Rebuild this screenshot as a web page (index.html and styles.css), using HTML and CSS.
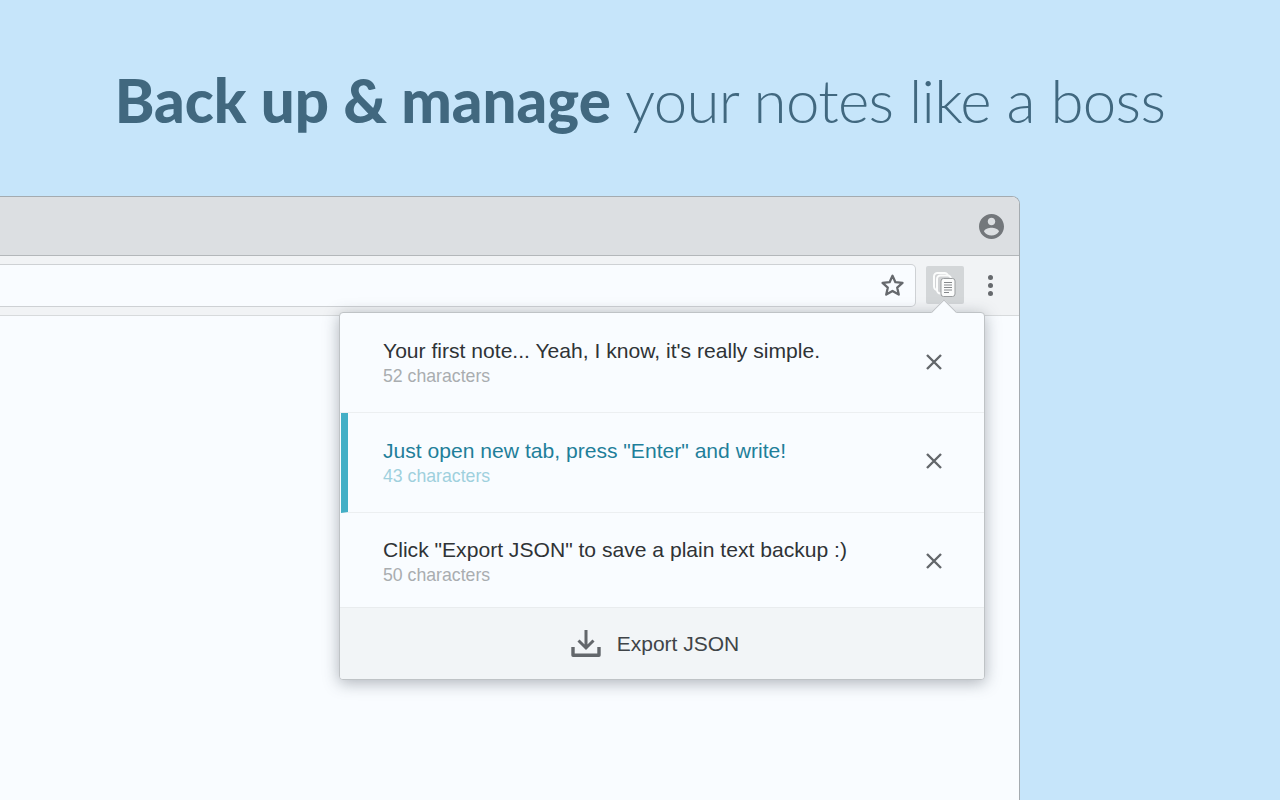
FILE: index.html
```html
<!DOCTYPE html>
<html lang="en">
<head>
<meta charset="utf-8">
<title>Back up &amp; manage your notes</title>
<link rel="stylesheet" href="styles.css">
</head>
<body>
<h1 class="headline"><strong>Back up &amp; manage</strong> your notes like a boss</h1>
<div class="browser">
  <div class="tabstrip">
    <svg class="avatar" viewBox="2 2 20 20"><path fill="#73777b" d="M12 2C6.480 2 2 6.480 2 12s4.480 10 10 10 10-4.480 10-10S17.520 2 12 2zm0 3c1.660 0 3 1.340 3 3s-1.340 3-3 3-3-1.340-3-3 1.340-3 3-3zm0 14.200c-2.500 0-4.710-1.280-6-3.220.030-1.990 4-3.080 6-3.080 1.990 0 5.970 1.090 6 3.080-1.290 1.940-3.500 3.220-6 3.220z"/></svg>
  </div>
  <div class="toolbar">
    <div class="omnibox">
      <svg class="star" viewBox="0 0 24 24"><path fill="none" stroke="#66696d" stroke-width="2.200" stroke-linejoin="round" d="M12 2.600l2.800 6.200 6.800.7-5.100 4.500 1.500 6.700-6-3.500-6 3.500 1.500-6.700-5.100-4.500 6.800-.7z"/></svg>
    </div>
    <div class="ext-button">
      <svg class="ext-icon" viewBox="0 0 24 26">
        <rect x="1" y="1" width="14" height="17" rx="3.500" fill="#d0d2d4" stroke="#fbfcfc" stroke-width="2"/>
        <rect x="4" y="3.500" width="14" height="18" rx="3.500" fill="#d0d2d4" stroke="#fbfcfc" stroke-width="2"/>
        <rect x="8" y="6.500" width="14" height="18" rx="2.500" fill="#fbfcfc" stroke="#9a9d9f" stroke-width="1"/>
        <path stroke="#85888b" stroke-width="1.200" d="M11 10.500h8M11 13h8M11 15.500h8M11 18h8M11 20.500h5"/>
      </svg>
    </div>
    <div class="menu-dots"><span></span><span></span><span></span></div>
  </div>
  <div class="content"></div>
  <div class="popup">
    <div class="arrow"></div>
    <div class="note first">
      <div class="note-text">
        <div class="note-title">Your first note... Yeah, I know, it's really simple.</div>
        <div class="note-count">52 characters</div>
      </div>
      <svg class="close" viewBox="0 0 16 16"><path stroke="#63676b" stroke-width="2.400" d="M1 1l14 14M15 1L1 15"/></svg>
    </div>
    <div class="note active">
      <div class="note-text">
        <div class="note-title">Just open new tab, press "Enter" and write!</div>
        <div class="note-count">43 characters</div>
      </div>
      <svg class="close" viewBox="0 0 16 16"><path stroke="#63676b" stroke-width="2.400" d="M1 1l14 14M15 1L1 15"/></svg>
    </div>
    <div class="note last">
      <div class="note-text">
        <div class="note-title">Click "Export JSON" to save a plain text backup :)</div>
        <div class="note-count">50 characters</div>
      </div>
      <svg class="close" viewBox="0 0 16 16"><path stroke="#63676b" stroke-width="2.400" d="M1 1l14 14M15 1L1 15"/></svg>
    </div>
    <div class="export">
      <svg class="export-icon" viewBox="0 0 30 28"><path fill="none" stroke="#63676b" stroke-width="3" d="M15 0v17M7.500 10.500L15 18l7.500-7.500"/><path fill="none" stroke="#63676b" stroke-width="3.400" stroke-linejoin="round" d="M2 17v8.300h26V17"/></svg>
      <span>Export JSON</span>
    </div>
  </div>
</div>
</body>
</html>
```
FILE: styles.css
```css
html, body {
  margin: 0;
  height: 800px;
  overflow: hidden;
}
body {
  background: #c6e5fa;
  display: flex;
  flex-direction: column;
  font-family: "Liberation Sans", Arial, sans-serif;
}
.headline {
  margin: 0;
  height: 196px;
  box-sizing: border-box;
  padding-top: 62px;
  text-align: center;
  font-family: Lato, sans-serif;
  font-weight: 300;
  font-size: 60px;
  line-height: 76px;
  letter-spacing: -0.68px;
  color: #41687f;
}
.headline strong {
  font-weight: 900;
  letter-spacing: 0;
}
.browser {
  position: relative;
  width: 1020px;
  flex: 1;
  box-sizing: border-box;
  display: flex;
  flex-direction: column;
  background: #f9fcff;
  border: 1px solid #a4abb0;
  border-left: 0;
  border-bottom: 0;
  border-top-right-radius: 8px;
}
.tabstrip {
  height: 58px;
  flex: none;
  display: flex;
  align-items: center;
  justify-content: flex-end;
  padding-right: 15px;
  background: #dcdfe2;
  border-bottom: 1px solid #b3b7ba;
  border-top-right-radius: 7px;
}
.avatar {
  width: 25px;
  height: 25px;
}
.toolbar {
  height: 59px;
  flex: none;
  display: flex;
  align-items: center;
  background: #f1f3f5;
  border-bottom: 1px solid #d7dadc;
}
.omnibox {
  width: 916px;
  height: 43px;
  box-sizing: border-box;
  flex: none;
  display: flex;
  align-items: center;
  justify-content: flex-end;
  padding-right: 10px;
  background: #f9fcff;
  border: 1px solid #ced1d4;
  border-left: 0;
  border-radius: 0 5px 5px 0;
}
.star {
  width: 25px;
  height: 25px;
}
.ext-button {
  width: 38px;
  height: 38px;
  margin-left: 10px;
  margin-bottom: 1px;
  display: flex;
  align-items: center;
  justify-content: center;
  background: #d3d6d8;
  border-radius: 2px;
}
.ext-icon {
  width: 24px;
  height: 26px;
}
.menu-dots {
  margin-left: 24px;
  display: flex;
  flex-direction: column;
  gap: 3px;
}
.menu-dots span {
  width: 5px;
  height: 5px;
  border-radius: 50%;
  background: #66696d;
}
.content {
  flex: 1;
  background: #f9fcff;
}
.popup {
  position: absolute;
  left: 339px;
  top: 115px;
  width: 646px;
  height: 368px;
  box-sizing: border-box;
  display: flex;
  flex-direction: column;
  background: #f9fcff;
  border: 1px solid #bfc3c6;
  border-radius: 4px;
  box-shadow: 0 3px 16px rgba(60, 70, 80, 0.4);
}
.arrow {
  position: absolute;
  left: 595px;
  top: -10px;
  width: 17px;
  height: 17px;
  background: #f9fcff;
  border-left: 1px solid #bfc3c6;
  border-top: 1px solid #bfc3c6;
  transform: rotate(45deg);
}
.note {
  position: relative;
  box-sizing: border-box;
  flex: none;
  display: flex;
  align-items: center;
  justify-content: space-between;
  padding: 0 42px 0 43px;
  border-bottom: 1px solid #eceff1;
}
.note.first {
  height: 100px;
}
.note.active {
  height: 100px;
  margin-left: 1px;
  padding-left: 35px;
  border-left: 7px solid #43afc6;
}
.note.last {
  height: 94px;
  padding-top: 3px;
  border-bottom: 0;
}
.note-title {
  font-size: 21.100px;
  line-height: 24px;
  color: #2f3336;
}
.note-count {
  margin-top: 2px;
  font-size: 17.700px;
  line-height: 22px;
  color: #a9adb0;
}
.active .note-title {
  color: #1f7f9a;
}
.active .note-count {
  color: #9fd0dd;
}
.close {
  width: 16px;
  height: 16px;
  flex: none;
  margin-bottom: 2px;
}
.active .close {
  margin-bottom: 4px;
}
.export {
  flex: 1;
  display: flex;
  align-items: center;
  justify-content: center;
  gap: 16px;
  padding-right: 14px;
  background: #f2f5f7;
  border-top: 1px solid #e9ecee;
  border-radius: 0 0 3px 3px;
  font-size: 21px;
  color: #3f4448;
}
.export-icon {
  width: 30px;
  height: 28px;
}
```
